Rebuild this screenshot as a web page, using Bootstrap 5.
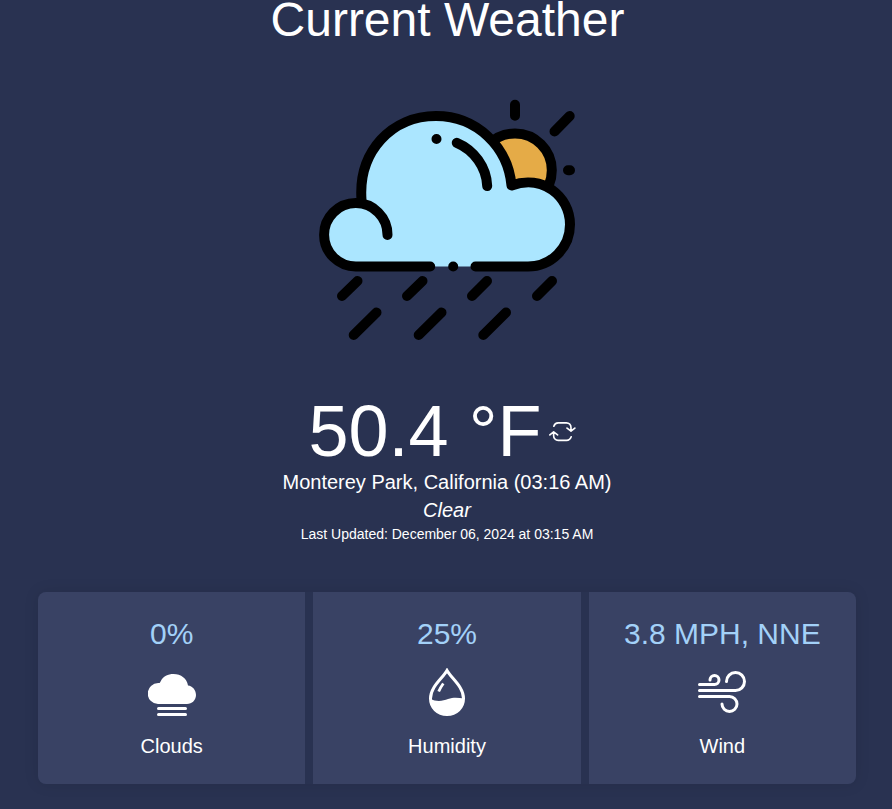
<!DOCTYPE html>
<html lang="en">
<head>
<meta charset="utf-8">
<meta name="viewport" content="width=device-width, initial-scale=1">
<title>Current Weather</title>
<link href="https://cdn.jsdelivr.net/npm/bootstrap@5.3.0/dist/css/bootstrap.min.css" rel="stylesheet">
<style>
body{background:#293251;color:#fff;font-family:"Liberation Sans",Arial,sans-serif;height:809px;overflow:hidden}
.page-title{font-size:48px;line-height:40px;padding-left:1px}
.sky-icon{width:256px;height:256px;margin-top:52px}
.weather{padding-left:2px}
.temp{font-size:72px;line-height:78px;margin-top:44px;padding-right:9px}
.refresh-icon{width:27px;height:27px}
.place{font-size:20px;line-height:28px}
.temp + .place{margin-top:-2px}
.updated{font-size:14px;line-height:20px}
.stats{width:818px;gap:8px;margin:48px 36px 0 38px;border-radius:8px;box-shadow:0 0 15px rgba(0,0,0,.1)}
.stat{background:#394264;height:192px;padding-top:24px}
.stat:first-child{border-radius:8px 0 0 8px}
.stat:last-child{border-radius:0 8px 8px 0}
.stat-value{font-size:30px;line-height:36px;color:#a3d1f8}
.stat-icon{width:48px;height:48px;margin:16px 0}
.stat-label{font-size:20px;line-height:28px}
</style>
<script src="https://cdn.jsdelivr.net/npm/bootstrap@5.3.0/dist/js/bootstrap.bundle.min.js"></script>
</head>
<body>
<main>
  <section class="weather d-flex flex-column align-items-center text-center">
    <h1 class="page-title fw-normal mb-0">Current Weather</h1>
    <svg class="sky-icon" viewBox="319 92 256 256" fill="none" stroke="#000" stroke-width="10" stroke-linecap="round" stroke-linejoin="round">
      <circle cx="515" cy="170.2" r="36.8" fill="#e5ab47"/>
      <path stroke="none" fill="#abe6ff" d="M356 266.500A31.500 31.500 0 0 1 362 203.500C358 155 392 116 436 116C477 116 508 147 511.500 185.500C542 174 570 196 570 224.500A42 42 0 0 1 528 266.500Z"/>
      <path d="M430.200 266.500H356A31.700 31.700 0 1 1 387.500 235"/>
      <path d="M361.500 200C358 151 392 116 436 116C477 116 508 147 511.500 185.500C542 174 570 196 570 224.500A42 42 0 0 1 528 266.500H475.500"/>
      <path d="M456.800 142.800C474 150 486.500 167 487.200 186M436.500 139h.01M453.200 266.500h.01M515 104.800v11M569.700 116l-15.200 15.500M568 170.300h2"/>
      <path d="M357.500 281L342 296M422.500 281L407 296M487 281L472 296M552 281L537 296M376.500 312.500L353.700 335M441.500 312.500L418.700 335M506 312.500L483.300 335"/>
    </svg>
    <div class="temp d-flex align-items-center">
      <span>50.4 °F</span>
      <svg class="refresh-icon ms-2" viewBox="0 0 28 28" fill="none" stroke="#fff" stroke-width="1.700" stroke-linecap="round" stroke-linejoin="round"><path d="M5 8.500C5.600 6.500 7.400 5 9.500 5H18C20.800 5 22.800 7 22.800 9.800V13M18.700 10.500L22.800 13.700L26.800 10.500M23 19.500C22.300 21.700 20.500 23.200 18.200 23.200H9.500C6.800 23.200 4.800 21 4.800 18.300V15M.9 17.500L4.800 14.300L8.900 17.500"/></svg>
    </div>
    <div class="place">Monterey Park, California (03:16 AM)</div>
    <div class="place fst-italic">Clear</div>
    <div class="updated">Last Updated: December 06, 2024 at 03:15 AM</div>
  </section>
  <section class="stats d-flex text-center">
    <div class="stat flex-fill w-100">
      <div class="stat-value">0%</div>
      <svg class="stat-icon" viewBox="0 0 48 48" fill="#fff"><path d="M10 36A10 10 0 0 1 10.500 15C12 15 12 14.500 12.700 13.200C15 8.500 20 6 25.500 6C33 6 39 10.500 40 17.500C44.500 18 48 22 48 27C48 32 44 36 39 36Z"/><path d="M10.500 40.500h27M10.500 46.500h27" fill="none" stroke="#fff" stroke-width="3" stroke-linecap="round"/></svg>
      <div class="stat-label">Clouds</div>
    </div>
    <div class="stat flex-fill w-100">
      <div class="stat-value">25%</div>
      <svg class="stat-icon" viewBox="0 0 48 48"><path d="M24 2.500C20 10 7.500 18.500 7.500 30.500C7.500 39.500 14.500 46.500 24 46.500S40.500 39.500 40.500 30.500C40.500 18.500 28 10 24 2.500Z" fill="none" stroke="#fff" stroke-width="3"/><path d="M7 31C14 34 20 33 25 31C31 29 36 30 41 30.500C41 39.500 34 47 24 47S7 40 7 31Z" fill="#fff"/><path d="M20.300 15.500C18.500 18 17 20.500 15.700 23.500" fill="none" stroke="#fff" stroke-width="2.800"/></svg>
      <div class="stat-label">Humidity</div>
    </div>
    <div class="stat flex-fill w-100">
      <div class="stat-value">3.8 MPH, NNE</div>
      <svg class="stat-icon" viewBox="0 0 48 48" fill="none" stroke="#fff" stroke-width="3" stroke-linecap="round"><path d="M1.500 16.500H16.500A4.500 4.500 0 1 0 12 12M1.500 22.500H37.500A9 9 0 1 0 28.500 13.500M1.500 28.500H31.500A7.500 7.500 0 1 1 24 36"/></svg>
      <div class="stat-label">Wind</div>
    </div>
  </section>
</main>
</body>
</html>
